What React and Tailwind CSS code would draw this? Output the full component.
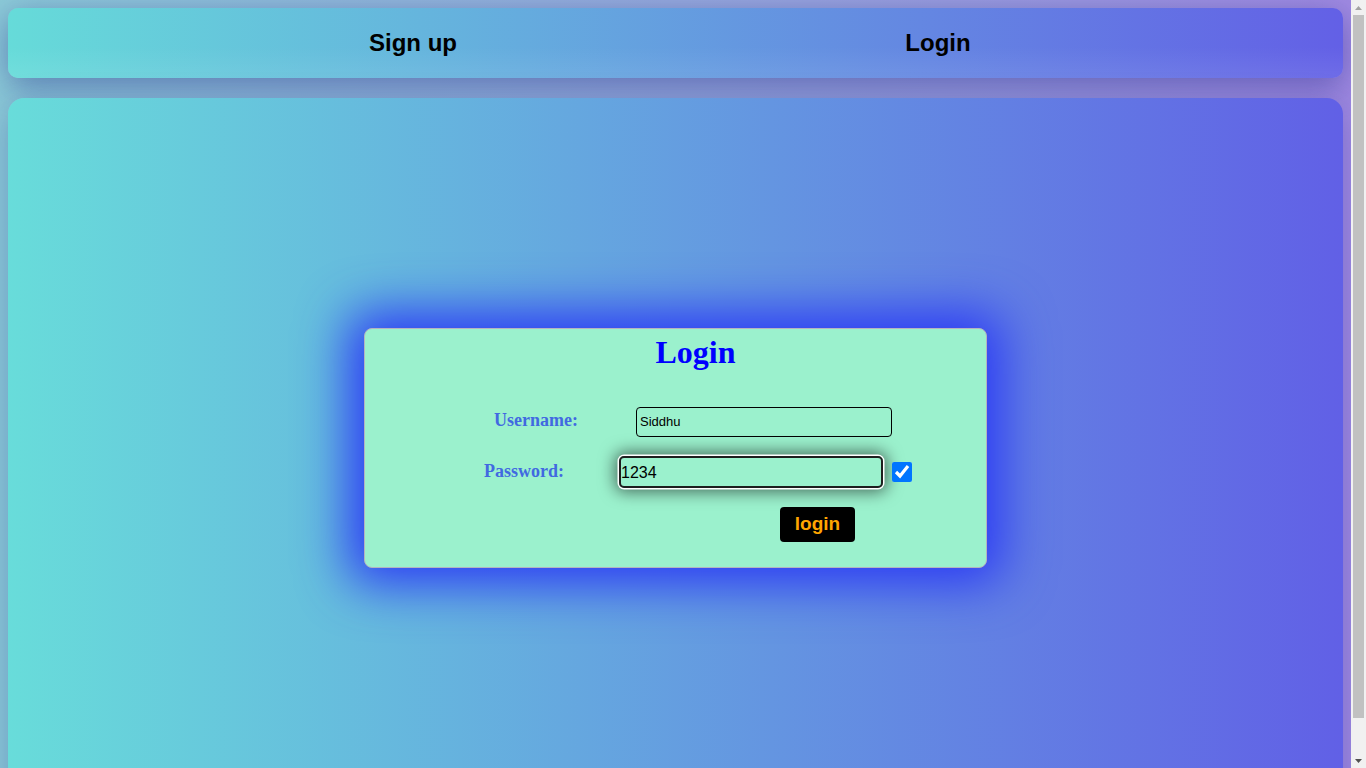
import React from "react";

function Scrollbar() {
  return (
    <div className="w-[15px] h-screen shrink-0 bg-[#f1f1f1] flex flex-col items-center">
      <div className="h-[15px] w-full flex items-center justify-center">
        <svg width="7" height="4" viewBox="0 0 7 4">
          <polygon points="3.5,0 7,4 0,4" fill="#a3a3a3" />
        </svg>
      </div>
      <div className="w-[11px] h-[703px] bg-[#c1c1c1]" />
      <div className="flex-1" />
      <div className="h-[15px] w-full flex items-center justify-center">
        <svg width="7" height="4" viewBox="0 0 7 4">
          <polygon points="0,0 7,0 3.5,4" fill="#505050" />
        </svg>
      </div>
    </div>
  );
}

export default function App() {
  return (
    <div className="flex h-screen overflow-hidden">
      <div className="w-[1351px] h-screen overflow-hidden shrink-0">
        <div
          className="p-2 bg-[linear-gradient(to_right,#8ccbd8,#a08ae2)]"
          style={{ fontFamily: '"Liberation Sans", Arial, sans-serif' }}
        >
          <nav className="h-[70px] rounded-[10px] flex items-center justify-center bg-[linear-gradient(to_bottom,rgba(255,255,255,0)_55%,rgba(255,255,255,0.08)),linear-gradient(to_right,#66dbd9,#6360e6)] shadow-[0_8px_32px_rgba(31,38,135,0.45)]">
            <div className="w-[525px] text-center text-[24px] font-bold text-black">Sign up</div>
            <div className="w-[525px] text-center text-[24px] font-bold text-black">Login</div>
          </nav>

          <main className="mt-5 h-[699px] rounded-t-[16px] flex items-center justify-center bg-[linear-gradient(to_right,#68dcda,#6160e6)] shadow-[0_8px_32px_rgba(31,38,135,0.3)]">
            <div className="w-[623px] h-[240px] rounded-[8px] border border-[#b4b4c0] bg-[#9bf1cd] shadow-[0_0_50px_16px_#2b3af5] flex flex-col">
              <h2
                className="text-center text-[32px] font-bold text-[#0000ff] leading-[37px] pl-10 mt-[5px]"
                style={{ fontFamily: '"Liberation Serif", "Times New Roman", serif' }}
              >
                Login
              </h2>

              <div className="flex items-center mt-[36px] pl-[129px]">
                <label
                  className="w-[83px] text-[18px] font-bold text-[#4169e1] -mt-[2px]"
                  style={{ fontFamily: '"Liberation Serif", "Times New Roman", serif' }}
                >
                  Username:
                </label>
                <input
                  type="text"
                  defaultValue="Siddhu"
                  className="ml-[59px] w-[256px] h-[30px] border border-black rounded-[4px] bg-transparent px-[3px] text-[13px] text-black outline-none"
                  style={{ fontFamily: '"Liberation Sans", Arial, sans-serif' }}
                />
              </div>

              <div className="flex items-center mt-[19px] pl-[119px]">
                <label
                  className="w-[80px] text-[18px] font-bold text-[#4169e1]"
                  style={{ fontFamily: '"Liberation Serif", "Times New Roman", serif' }}
                >
                  Password:
                </label>
                <input
                  type="text"
                  defaultValue="1234"
                  className="ml-[55px] w-[264px] h-[32px] border-2 border-[#1e1e1e] rounded-[5px] bg-transparent px-0 pt-[3px] text-[16px] text-black outline-none ring-[1.5px] ring-white shadow-[0_0_16px_4px_rgba(0,0,0,0.55)]"
                  style={{ fontFamily: '"Liberation Sans", Arial, sans-serif' }}
                />
                <input
                  type="checkbox"
                  defaultChecked
                  className="ml-[9px] w-5 h-5 accent-[#0075ff]"
                />
              </div>

              <div className="flex mt-[19px] pl-[415px]">
                <button className="w-[75px] h-[35px] bg-black rounded-[4px] text-[#ffa500] text-[19px] font-bold">
                  login
                </button>
              </div>
            </div>
          </main>
        </div>
      </div>
      <Scrollbar />
    </div>
  );
}
